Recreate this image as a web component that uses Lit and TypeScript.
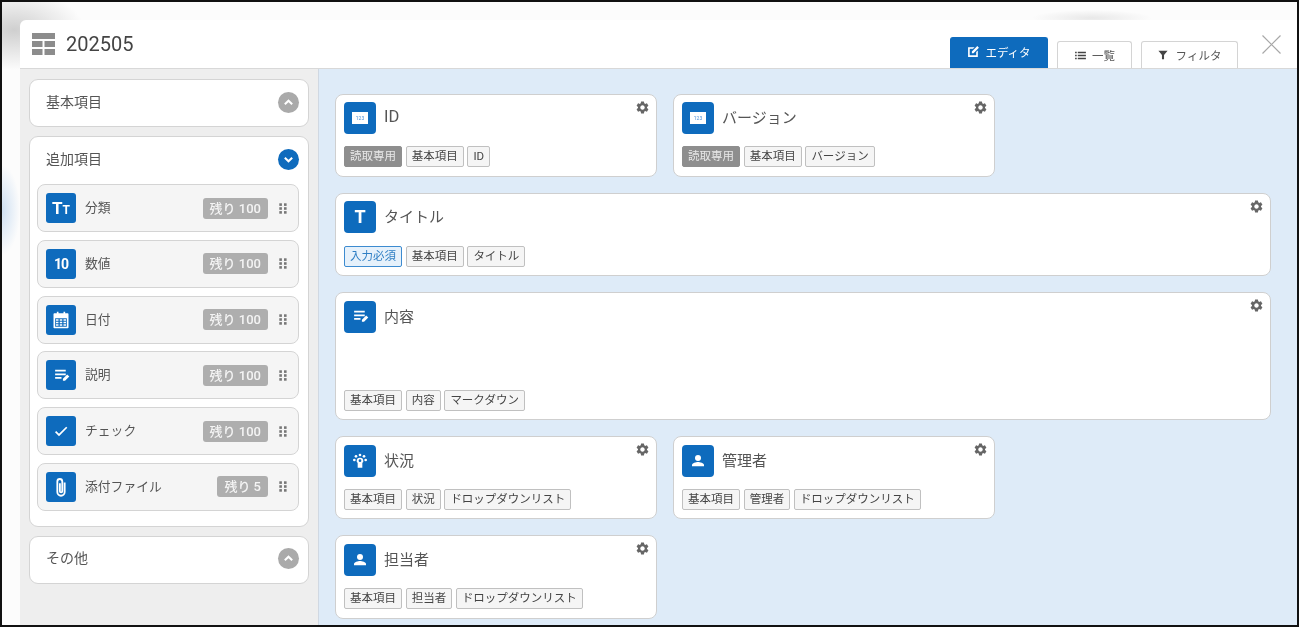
import { LitElement, html, css, svg } from "lit";
import { customElement } from "lit/decorators.js";

const GEAR = "M19.14 12.94c.04-.3.06-.61.06-.94 0-.32-.02-.64-.07-.94l2.03-1.58a.49.49 0 0 0 .12-.61l-1.92-3.32a.488.488 0 0 0-.59-.22l-2.39.96c-.5-.38-1.03-.7-1.62-.94l-.36-2.54a.484.484 0 0 0-.48-.41h-3.84c-.24 0-.43.17-.47.41l-.36 2.54c-.59.24-1.13.57-1.62.94l-2.39-.96c-.22-.08-.47 0-.59.22L2.74 8.87c-.12.21-.08.47.12.61l2.03 1.58c-.05.3-.09.63-.09.94s.02.64.07.94l-2.03 1.58a.49.49 0 0 0-.12.61l1.92 3.32c.12.22.37.29.59.22l2.39-.96c.5.38 1.03.7 1.62.94l.36 2.54c.05.24.24.41.48.41h3.84c.24 0 .44-.17.47-.41l.36-2.54c.59-.24 1.13-.56 1.62-.94l2.39.96c.22.08.47 0 .59-.22l1.92-3.32c.12-.22.07-.47-.12-.61l-2.01-1.58zM12 15.6c-1.98 0-3.6-1.62-3.6-3.6s1.62-3.6 3.6-3.6 3.6 1.62 3.6 3.6-1.62 3.6-3.6 3.6z";

const icon = (kind: string) => {
  switch (kind) {
    case "tt":
      return html`<span class="glyph tt">T<small>T</small></span>`;
    case "ten":
      return html`<span class="glyph ten">10</span>`;
    case "t":
      return html`<span class="glyph big">T</span>`;
    case "num":
      return html`<span class="numbox">123</span>`;
    case "cal":
      return html`<svg class="ic s20" viewBox="0 0 24 24" fill="#fff">
        <path d="M7 2h2v3H7zM15 2h2v3h-2zM4 4h16a1 1 0 0 1 1 1v16a1 1 0 0 1-1 1H4a1 1 0 0 1-1-1V5a1 1 0 0 1 1-1z"/>
        <path fill="#0e6bbd" d="M5 10h14v10H5z"/>
        <path fill="#fff" d="M6 11h3v2H6zM10.500 11h3v2h-3zM15 11h3v2h-3zM6 14h3v2H6zM10.500 14h3v2h-3zM15 14h3v2h-3zM6 17h3v2H6zM10.500 17h3v2h-3zM15 17h3v2h-3z"/>
      </svg>`;
    case "note":
      return html`<svg class="ic" viewBox="0 0 24 24" fill="#fff">
        <path d="M3 4h15v2.500H3zM3 9h15v2.500H3zM3 14h9v2.500H3zM14 19.500v-3l6-6 3 3-6 6z"/>
      </svg>`;
    case "check":
      return html`<svg class="ic s16" viewBox="0 0 24 24" fill="#fff">
        <path d="M9 16.200 4.800 12l-1.800 1.800L9 19.800 21.500 7.300l-1.800-1.800z"/>
      </svg>`;
    case "clip":
      return html`<svg class="ic s22" viewBox="0 0 24 24" fill="none" stroke="#fff" stroke-width="2">
        <path d="M16 7v10.500a4 4 0 0 1-8 0V6a2.700 2.700 0 0 1 5.400 0v10.500a1.300 1.300 0 0 1-2.600 0V8"/>
      </svg>`;
    case "tree":
      return html`<svg class="ic s16" viewBox="0 0 24 24" fill="#fff">
        <circle cx="12" cy="3" r="2"/><circle cx="6" cy="5" r="2"/><circle cx="18" cy="5" r="2"/>
        <circle cx="3.500" cy="10.500" r="2"/><circle cx="20.500" cy="10.500" r="2"/>
        <path d="M12 7a5 5 0 0 1 5 5c0 1.500-.5 2-1.500 2.500V22h-7v-7.500C7.500 14 7 13.500 7 12a5 5 0 0 1 5-5z"/>
        <circle cx="12" cy="11.500" r="2" fill="#0e6bbd"/>
      </svg>`;
    case "user":
      return html`<svg class="ic s16" viewBox="0 0 24 24" fill="#fff">
        <circle cx="12" cy="7.500" r="4.500"/><path d="M3 20v-2c0-3 6-4.500 9-4.500s9 1.500 9 4.500v2z"/>
      </svg>`;
  }
  return null;
};

const grip = svg`<svg class="grip" viewBox="0 0 8 11" width="8" height="11" fill="#777">
  <rect x=".3" y=".3" width="2.600" height="2.600"/><rect x="5" y=".3" width="2.600" height="2.600"/>
  <rect x=".3" y="4.200" width="2.600" height="2.600"/><rect x="5" y="4.200" width="2.600" height="2.600"/>
  <rect x=".3" y="8.100" width="2.600" height="2.600"/><rect x="5" y="8.100" width="2.600" height="2.600"/>
</svg>`;

const chevron = (dir: "up" | "down") => html`<span class="toggle ${dir}">
  <svg viewBox="0 0 12 12" width="11" height="11" fill="none" stroke="#fff" stroke-width="2.200">
    <path d=${dir === "up" ? "M2 8l4-4 4 4" : "M2 4l4 4 4-4"} />
  </svg>
</span>`;

const ITEMS = [
  { icon: "tt", name: "分類", left: "残り 100" },
  { icon: "ten", name: "数値", left: "残り 100" },
  { icon: "cal", name: "日付", left: "残り 100" },
  { icon: "note", name: "説明", left: "残り 100" },
  { icon: "check", name: "チェック", left: "残り 100" },
  { icon: "clip", name: "添付ファイル", left: "残り 5" },
];

type Field = { icon: string; name: string; tags: string[]; wide?: boolean; tall?: boolean; latin?: boolean };
const ROWS: Field[][] = [
  [
    { icon: "num", name: "ID", tags: ["!読取専用", "基本項目", "ID"], latin: true },
    { icon: "num", name: "バージョン", tags: ["!読取専用", "基本項目", "バージョン"] },
  ],
  [{ icon: "t", name: "タイトル", tags: ["*入力必須", "基本項目", "タイトル"], wide: true }],
  [{ icon: "note", name: "内容", tags: ["基本項目", "内容", "マークダウン"], wide: true, tall: true }],
  [
    { icon: "tree", name: "状況", tags: ["基本項目", "状況", "ドロップダウンリスト"] },
    { icon: "user", name: "管理者", tags: ["基本項目", "管理者", "ドロップダウンリスト"] },
  ],
  [{ icon: "user", name: "担当者", tags: ["基本項目", "担当者", "ドロップダウンリスト"] }],
];

@customElement("app-root")
export class AppRoot extends LitElement {
  static styles = css`
    :host {
      display: block;
      width: 1299px;
      height: 627px;
      box-sizing: border-box;
      border: 2px solid #111;
      overflow: hidden;
      padding: 18px 0 0 18px;
      font-family: Roboto, "Noto Sans CJK JP", sans-serif;
      color: #444;
      background:
        radial-gradient(ellipse 18px 45px at 0px 208px, #cfe0f2, transparent),
        radial-gradient(ellipse 70px 40px at 12px 28px, #cfcfcf, transparent),
        radial-gradient(ellipse 60px 8px at 1090px 16px, #e8e8e8, transparent),
        #fcfcfc;
    }
    .modal {
      height: 100%;
      display: flex;
      flex-direction: column;
      background: #fff;
      border-radius: 6px 0 0 0;
      overflow: hidden;
      filter: blur(0.35px);
    }
    header {
      height: 48px;
      flex: none;
      display: flex;
      align-items: flex-end;
      border-bottom: 1px solid #d8d8d8;
      padding-left: 12px;
    }
    .logo {
      align-self: flex-start;
      width: 23px;
      height: 22px;
      margin-top: 13px;
    }
    h1 {
      align-self: center;
      margin: 0 0 0 11px;
      font: 400 20px/24px Roboto, sans-serif;
      color: #444;
      flex: 1;
    }
    .tabs {
      display: flex;
      align-items: flex-end;
      gap: 9px;
    }
    .tab {
      display: flex;
      align-items: center;
      justify-content: center;
      gap: 5px;
      box-sizing: border-box;
      height: 27px;
      width: 75px;
      background: #fff;
      border: 1px solid #d4d4d4;
      border-bottom: 0;
      border-radius: 3px 3px 0 0;
      font-size: 11.500px;
      color: #555;
    }
    .tab.on {
      height: 31px;
      width: 98px;
      background: #0e6bbd;
      border-color: #0e6bbd;
      color: #fff;
      padding-bottom: 3px;
    }
    .tab.filter {
      width: 97px;
      gap: 8px;
    }
    .tab svg {
      display: block;
    }
    .close {
      align-self: flex-start;
      margin: 15px 16px 0 24px;
      width: 19px;
      height: 19px;
      display: block;
    }
    .body {
      flex: 1;
      min-height: 0;
      display: flex;
    }
    aside {
      width: 298px;
      flex: none;
      box-sizing: border-box;
      background: #eeeeee;
      padding: 10px 9px 0;
      display: flex;
      flex-direction: column;
      gap: 9px;
    }
    .panel {
      background: #fff;
      border: 1px solid #d4d4d4;
      border-radius: 9px;
      box-sizing: border-box;
    }
    .panel-head {
      height: 46px;
      box-sizing: border-box;
      display: flex;
      align-items: center;
      justify-content: space-between;
      padding: 0 9px 2px 16px;
      font-size: 14px;
      color: #555;
    }
    .panel-head .label {
      padding-bottom: 3px;
    }
    .toggle {
      width: 21px;
      height: 21px;
      border-radius: 50%;
      background: #aaa;
      display: flex;
      align-items: center;
      justify-content: center;
    }
    .toggle.down {
      background: #0e6bbd;
    }
    .list {
      display: flex;
      flex-direction: column;
      gap: 7.800px;
      margin-top: 1px;
      padding: 0 9px 15px 7px;
    }
    .item {
      height: 48px;
      box-sizing: border-box;
      background: #f5f5f5;
      border: 1px solid #d4d4d4;
      border-radius: 8px;
      display: flex;
      align-items: center;
      padding-left: 8px;
      padding-right: 11px;
      font-size: 12.800px;
      color: #555;
    }
    .item .box {
      width: 30px;
      height: 30px;
      border-radius: 3px;
    }
    .item .name {
      flex: 1;
      margin-left: 9px;
      padding-bottom: 3px;
    }
    .left {
      height: 21px;
      padding: 0 7px;
      line-height: 21px;
      border-radius: 3px;
      background: #aeaeae;
      color: #f4f4f4;
      font-size: 13px;
      font-weight: 500;
      margin-right: 11px;
    }
    .grip {
      display: block;
    }
    .box {
      background: #0e6bbd;
      display: flex;
      align-items: center;
      justify-content: center;
      flex: none;
    }
    .ic {
      width: 17px;
      height: 17px;
      display: block;
    }
    .ic.s16 {
      width: 16px;
      height: 16px;
    }
    .ic.s20 {
      width: 20px;
      height: 20px;
    }
    .ic.s22 {
      width: 22px;
      height: 22px;
    }
    .glyph {
      color: #fff;
      font: 700 17px/1 Roboto, sans-serif;
    }
    .glyph small {
      font-size: 12px;
    }
    .ten {
      font-size: 14px;
      letter-spacing: -1px;
    }
    .big {
      font-size: 18px;
    }
    .numbox {
      width: 16px;
      height: 12px;
      background: #fff;
      color: #4a90d9;
      font: 400 5px/12px Roboto, sans-serif;
      text-align: center;
    }
    main {
      flex: 1;
      min-width: 0;
      background: #deebf8;
      border-left: 1px solid #d0d8e2;
      padding: 24.600px 26px 0 16px;
      display: flex;
      flex-direction: column;
      gap: 16px;
    }
    .row {
      display: flex;
      gap: 16px;
    }
    .card {
      position: relative;
      width: 322px;
      height: 83.300px;
      box-sizing: border-box;
      background: #fff;
      border: 1px solid #cfcfcf;
      border-radius: 8px;
      padding: 7.500px 8px 8.500px;
      display: flex;
      flex-direction: column;
      justify-content: space-between;
    }
    .card.wide {
      width: 100%;
    }
    .card.tall {
      height: 128px;
    }
    .title {
      display: flex;
      align-items: center;
      gap: 8px;
      font-size: 15px;
      color: #555;
    }
    .title .text {
      padding-bottom: 3px;
    }
    .title .text.latin {
      font-size: 16.500px;
    }
    .card .box {
      width: 32px;
      height: 32px;
      border-radius: 4px;
    }
    .gear {
      position: absolute;
      top: 5px;
      right: 6px;
      width: 15px;
      height: 15px;
      display: block;
    }
    .tags {
      display: flex;
      gap: 3.700px;
    }
    .tag {
      height: 21px;
      box-sizing: border-box;
      line-height: 18.500px;
      padding: 0 5px;
      border: 1px solid #c0c0c0;
      background: #f5f5f5;
      border-radius: 2px;
      font-size: 11.500px;
      color: #444;
    }
    .tag.ro {
      background: #8e8e8e;
      border-color: #8e8e8e;
      color: #e8e8e8;
    }
    .tag.req {
      background: #e6f1fb;
      border-color: #3d8bd0;
      color: #2f7fc4;
    }
  `;

  private tag(t: string) {
    const kind = t[0] === "!" ? "ro" : t[0] === "*" ? "req" : "";
    return html`<span class="tag ${kind}">${kind ? t.slice(1) : t}</span>`;
  }

  private card(f: Field) {
    return html`<div class="card ${f.wide ? "wide" : ""} ${f.tall ? "tall" : ""}">
      <div class="title">
        <span class="box">${icon(f.icon)}</span>
        <span class="text ${f.latin ? "latin" : ""}">${f.name}</span>
      </div>
      <svg class="gear" viewBox="0 0 24 24" fill="#666"><path d=${GEAR} /></svg>
      <div class="tags">${f.tags.map((t) => this.tag(t))}</div>
    </div>`;
  }

  render() {
    return html`<div class="modal">
      <header>
        <svg class="logo" viewBox="0 0 23 22" fill="#8c8c8c">
          <rect width="23" height="6" />
          <rect y="8" width="10.500" height="6" /><rect x="12.500" y="8" width="10.500" height="6" />
          <rect y="16" width="10.500" height="6" /><rect x="12.500" y="16" width="10.500" height="6" />
        </svg>
        <h1>202505</h1>
        <div class="tabs">
          <div class="tab on">
            <svg viewBox="0 0 24 24" width="13" height="13" fill="#fff">
              <path d="M2 4h12l-3 3H5v12h12v-6l3-3v12H2zM9 12 19 2l3 3-10 10H9z" />
            </svg>エディタ
          </div>
          <div class="tab">
            <svg viewBox="0 0 24 24" width="13" height="13" fill="#444">
              <path d="M2 5h3v3H2zM7 5h15v3H7zM2 10.500h3v3H2zM7 10.500h15v3H7zM2 16h3v3H2zM7 16h15v3H7z" />
            </svg>一覧
          </div>
          <div class="tab filter">
            <svg viewBox="0 0 24 24" width="10" height="10" fill="#444">
              <path d="M1 2h22l-8.500 10v10h-5V12z" />
            </svg>フィルタ
          </div>
        </div>
        <svg class="close" viewBox="0 0 19 19" fill="none" stroke="#a8a8a8" stroke-width="1.200">
          <path d="M.5.5l18 18M18.500.5l-18 18" />
        </svg>
      </header>
      <div class="body">
        <aside>
          <section class="panel">
            <div class="panel-head"><span class="label">基本項目</span>${chevron("up")}</div>
          </section>
          <section class="panel">
            <div class="panel-head"><span class="label">追加項目</span>${chevron("down")}</div>
            <div class="list">
              ${ITEMS.map(
                (it) => html`<div class="item">
                  <span class="box">${icon(it.icon)}</span>
                  <span class="name">${it.name}</span>
                  <span class="left">${it.left}</span>
                  ${grip}
                </div>`
              )}
            </div>
          </section>
          <section class="panel">
            <div class="panel-head"><span class="label">その他</span>${chevron("up")}</div>
          </section>
        </aside>
        <main>
          ${ROWS.map((r) => html`<div class="row">${r.map((f) => this.card(f))}</div>`)}
        </main>
      </div>
    </div>`;
  }
}
